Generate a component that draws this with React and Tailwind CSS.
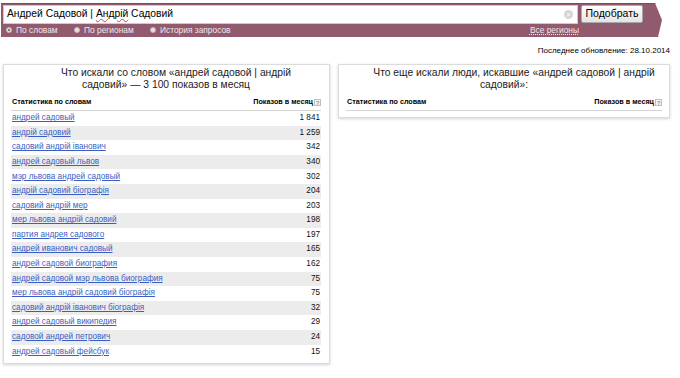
import React from "react";

const rows = [
  ["андрей садовый", "1 841"],
  ["андрій садовий", "1 259"],
  ["садовий андрій іванович", "342"],
  ["андрей садовый львов", "340"],
  ["мэр львова андрей садовый", "302"],
  ["андрій садовий біографія", "204"],
  ["садовий андрій мер", "203"],
  ["мер львова андрій садовий", "198"],
  ["партия андрея садового", "197"],
  ["андрей иванович садовый", "165"],
  ["андрей садовой биография", "162"],
  ["андрей садовой мэр львова биография", "75"],
  ["мер львова андрій садовий біографія", "75"],
  ["садовий андрій іванович біографія", "32"],
  ["андрей садовый википедия", "29"],
  ["садовой андрей петрович", "24"],
  ["андрей садовый фейсбук", "15"],
];

function Help() {
  return (
    <span className="inline-flex items-center justify-center w-[7px] h-[7px] border border-[#b8c4b8] text-[6px] leading-none text-[#8a9a8a] ml-[1px] bg-[#f4f7f4]">
      ?
    </span>
  );
}

function TableHead() {
  return (
    <div className="flex items-end justify-between h-[15px] pb-[2px] border-b border-[#d4d4d4] text-[7.2px] font-bold text-black">
      <span className="pl-[1px]">Статистика по словам</span>
      <span className="flex items-center">Показов в месяц<Help /></span>
    </div>
  );
}

function Radio({ checked, label }) {
  return (
    <span className="flex items-center gap-[4px]">
      <span className="w-[6px] h-[6px] rounded-full bg-[#e8e0e3] border border-[#c9b5bd] flex items-center justify-center">
        {checked && <span className="w-[2px] h-[2px] rounded-full bg-[#555]" />}
      </span>
      <span>{label}</span>
    </span>
  );
}

export default function App() {
  return (
    <div className="w-[680px] h-[378px] bg-white font-['Liberation_Sans',Arial,sans-serif] overflow-hidden">
      {/* header bar */}
      <div className="mt-[3px] ml-[1px] w-[662px] h-[34px] bg-[#915a6f] border-t border-[#7d4a5d] [clip-path:polygon(0_0,654px_0,661px_50%,657px_100%,0_100%)]">
        <div className="flex items-start pt-[1px] pl-[2px]">
          <div className="w-[575px] h-[19px] bg-white border border-[#dcc9a6] flex items-center justify-between pl-[3px] pr-[4px]">
            <span className="text-[10.3px] text-black leading-none">
              Андрей Садовой | <span className="underline decoration-wavy decoration-[#e04040] decoration-[0.5px]">Андрій</span> Садовий
            </span>
            <span className="w-[9px] h-[9px] rounded-full bg-[#d6d6d6] flex items-center justify-center text-white text-[7px] leading-none">×</span>
          </div>
          <div className="ml-[3px] w-[62px] h-[18px] border border-[#a9a9a9] rounded-[2px] bg-gradient-to-b from-white to-[#e4e4e4] flex items-center justify-center text-[10.5px] text-black">
            Подобрать
          </div>
        </div>
        <div className="flex items-center justify-between w-[575px] ml-[5px] mt-[1px] text-[8.4px] text-[#f1e6ea] h-[10px]">
          <div className="flex items-center">
            <span className="w-[68px]"><Radio checked label="По словам" /></span>
            <span className="w-[76px]"><Radio label="По регионам" /></span>
            <Radio label="История запросов" />
          </div>
          <span className="underline decoration-dotted mr-[2px]">Все регионы</span>
        </div>
      </div>

      <div className="flex justify-end pr-[10px] pt-[8px] text-[8px] text-black h-[20px]">
        Последнее обновление: 28.10.2014
      </div>

      <div className="flex items-start gap-[8px] pl-[3px] mt-[7px]">
        {/* left card */}
        <div className="w-[327px] border border-[#dcdcdc] shadow-[0_1px_3px_rgba(0,0,0,0.18)] pl-[7px] pr-[8px] pt-[2px] pb-[4px]">
          <div className="text-[10.3px] leading-[12px] text-[#222]">
            <div className="text-center pl-[20px]">Что искали со словом «андрей садовой | андрій</div>
            <div className="text-center">садовий» — 3 100 показов в месяц</div>
          </div>
          <div className="mt-[5px]">
            <TableHead />
            {rows.map(([q, n], i) => (
              <div
                key={i}
                className={`flex items-center justify-between h-[14.6px] text-[8.2px] ${i % 2 === 1 ? "bg-[#ececec]" : "bg-white"}`}
              >
                <span className="pl-[1px] text-[#3a5fc4] underline">{q}</span>
                <span className="pr-[1px] text-[#111]">{n}</span>
              </div>
            ))}
          </div>
        </div>

        {/* right card */}
        <div className="w-[332px] border border-[#dcdcdc] shadow-[0_1px_3px_rgba(0,0,0,0.18)] pl-[7px] pr-[7px] pt-[2px] pb-[6px]">
          <div className="text-[10.3px] leading-[12px] text-[#222]">
            <div className="text-center pl-[20px]">Что еще искали люди, искавшие «андрей садовой | андрій</div>
            <div className="text-center">садовий»:</div>
          </div>
          <div className="mt-[5px]">
            <TableHead />
          </div>
        </div>
      </div>
    </div>
  );
}
